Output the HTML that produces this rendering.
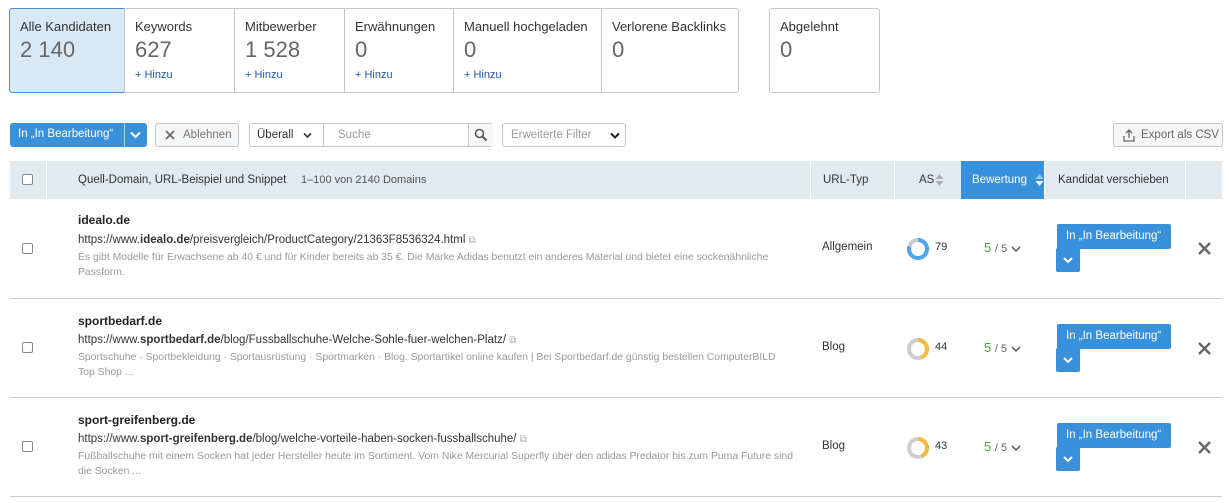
<!DOCTYPE html>
<html><head><meta charset="utf-8"><style>
*{box-sizing:border-box;margin:0;padding:0}
body{width:1229px;height:503px;background:#fff;font-family:"Liberation Sans",sans-serif;color:#333;position:relative;overflow:hidden}
.a{position:absolute;white-space:nowrap}
.tab{position:absolute;top:8px;height:85px;border:1px solid #c4c7cb;padding:10px 0 0 10px;font-size:13px;color:#333}
.tab .n{font-size:22px;color:#666;margin-top:4px;line-height:24px}
.tab .h{font-size:11px;color:#1e58a8;margin-top:7px}
.btn{position:absolute;border:1px solid #c4c7cb;border-radius:3px;font-size:11.5px;color:#777;height:24px;line-height:22px}
.hdr{position:absolute;top:161px;height:38px;background:#e2e9ef;font-size:11.5px;line-height:38px;color:#333}
.cb{position:absolute;width:11px;height:11px;border:1px solid #888;border-radius:2px;background:#fff}
.sep{position:absolute;left:10px;width:1212px;height:1px;background:#ccc}
.dom{font-size:12px;font-weight:bold;color:#222}
.url{font-size:11.5px;color:#333}
.sn{font-size:10.4px;color:#999;line-height:15px}
.bb{position:absolute;background:#3a91db;color:#fff;font-size:11.5px;border-radius:2px}
</style></head><body>
<div class="tab" style="left:9px;width:116px;background:#d9e8f5;border-color:#4a90d0;border-radius:3px 0 0 3px">Alle Kandidaten<div class="n">2 140</div></div>
<div class="tab" style="left:124px;width:111px">Keywords<div class="n">627</div><div class="h">+ Hinzu</div></div>
<div class="tab" style="left:234px;width:111px">Mitbewerber<div class="n">1 528</div><div class="h">+ Hinzu</div></div>
<div class="tab" style="left:344px;width:110px">Erwähnungen<div class="n">0</div><div class="h">+ Hinzu</div></div>
<div class="tab" style="left:453px;width:149px">Manuell hochgeladen<div class="n">0</div><div class="h">+ Hinzu</div></div>
<div class="tab" style="left:601px;width:138px;border-radius:0 3px 3px 0">Verlorene Backlinks<div class="n">0</div></div>
<div class="tab" style="left:769px;width:111px;border-radius:3px">Abgelehnt<div class="n">0</div></div>

<div class="bb" style="left:10px;top:123px;width:137px;height:24px;border-radius:3px"><span class="a" style="left:8px;top:5px">In „In Bearbeitung“</span><div class="a" style="left:114px;top:0;width:1px;height:24px;background:#fff;opacity:.6"></div><svg class="a" style="left:120px;top:8px" width="11" height="8"><path d="M1 1.5L5.5 6 10 1.5" stroke="#fff" stroke-width="2" fill="none"/></svg></div>
<div class="btn" style="left:155px;top:123px;width:84px;background:#f5f6f7"><svg class="a" style="left:9px;top:6px" width="10" height="10"><path d="M1 1L9 9M9 1L1 9" stroke="#666" stroke-width="1.6"/></svg><span class="a" style="left:27px">Ablehnen</span></div>
<div class="btn" style="left:249px;top:123px;width:244px;color:#333"><span class="a" style="left:7px">Überall</span><svg class="a" style="left:53px;top:8px" width="9" height="7"><path d="M1 1.5L4.5 5 8 1.5" stroke="#333" stroke-width="1.6" fill="none"/></svg><div class="a" style="left:73px;top:0;width:1px;height:22px;background:#c4c7cb"></div><span class="a" style="left:88px;color:#999">Suche</span><div class="a" style="left:218px;top:0;width:25px;height:22px;border-left:1px solid #c4c7cb;background:#f5f6f7"></div><svg class="a" style="left:224px;top:4px" width="14" height="14"><circle cx="5.5" cy="5.5" r="4" stroke="#555" stroke-width="1.6" fill="none"/><path d="M8.5 8.5L12.5 12.5" stroke="#555" stroke-width="2"/></svg></div>
<div class="btn" style="left:502px;top:123px;width:124px;color:#999"><span class="a" style="left:8px">Erweiterte Filter</span><svg class="a" style="left:107px;top:8px" width="10" height="8"><path d="M1 1.5L5 5.5 9 1.5" stroke="#222" stroke-width="2" fill="none"/></svg></div>
<div class="btn" style="left:1113px;top:123px;width:110px;background:#f5f6f7;color:#666"><svg class="a" style="left:9px;top:5px" width="12" height="13"><path d="M6 9V1M3 4L6 1 9 4M1 7V12H11V7" stroke="#666" stroke-width="1.3" fill="none"/></svg><span class="a" style="left:27px">Export als CSV</span></div>

<div class="hdr" style="left:10px;width:36px"></div>
<div class="cb" style="left:22px;top:174px"></div>
<div class="hdr" style="left:47px;width:763px"><span class="a" style="left:31px">Quell-Domain, URL-Beispiel und Snippet</span><span class="a" style="left:254px;color:#555;font-size:11px">1–100 von 2140 Domains</span></div>
<div class="hdr" style="left:811px;width:83px"><span class="a" style="left:12px">URL-Typ</span></div>
<div class="hdr" style="left:895px;width:66px"><span class="a" style="left:24px">AS</span><svg class="a" style="left:40px;top:12px" width="9" height="14"><path d="M0.5 6L4.5 1 8.5 6Z M0.5 8L4.5 13 8.5 8Z" fill="#aab"/></svg></div>
<div class="hdr" style="left:961px;width:83px;background:#3a91db;color:#fff"><span class="a" style="left:11px">Bewertung</span><svg class="a" style="left:74px;top:12px" width="9" height="14"><path d="M0.5 6L4.5 1 8.5 6Z" fill="#9cc8ee"/><path d="M0.5 8L4.5 13 8.5 8Z" fill="#fff"/></svg></div>
<div class="hdr" style="left:1045px;width:140px"><span class="a" style="left:13px">Kandidat verschieben</span></div>
<div class="hdr" style="left:1186px;width:36px"></div>

<!-- row 1 -->
<div class="cb" style="left:22px;top:243px"></div>
<div class="a dom" style="left:78px;top:213px">idealo.de</div>
<div class="a url" style="left:78px;top:234px">https://www.<b>idealo.de</b>/preisvergleich/ProductCategory/21363F8536324.html <span style="color:#aaa;font-size:10px">⧉</span></div>
<div class="a sn" style="left:78px;top:250px">Es gibt Modelle für Erwachsene ab 40 € und für Kinder bereits ab 35 €. Die Marke Adidas benutzt ein anderes Material und bietet eine sockenähnliche<br>Passform.</div>
<div class="a" style="left:822px;top:241px;font-size:11.5px">Allgemein</div>
<svg class="a" style="left:906px;top:237px" width="24" height="24"><circle cx="12" cy="12" r="9" stroke="#ccc" stroke-width="4" fill="none"/><circle cx="12" cy="12" r="9" stroke="#4ea5e8" stroke-width="4" fill="none" stroke-dasharray="44.7 56.5" transform="rotate(-90 12 12)"/></svg>
<div class="a" style="left:935px;top:241px;font-size:11px">79</div>
<div class="a" style="left:984px;top:240px;font-size:13px;color:#666"><span style="color:#4ca43a">5</span> <span style="font-size:11px">/ 5</span></div>
<svg class="a" style="left:1011px;top:246px" width="10" height="7"><path d="M1 1L5 5 9 1" stroke="#666" stroke-width="1.6" fill="none"/></svg>
<div class="bb" style="left:1057px;top:224px;width:114px;height:25px"><span class="a" style="left:9px;top:6px">In „In Bearbeitung“</span></div>
<div class="bb" style="left:1056px;top:248px;width:24px;height:24px"><svg class="a" style="left:7px;top:9px" width="10" height="7"><path d="M1 1L5 5 9 1" stroke="#fff" stroke-width="2" fill="none"/></svg></div>
<svg class="a" style="left:1198px;top:242px" width="13" height="13"><path d="M1 1L12 12M12 1L1 12" stroke="#666" stroke-width="2.4"/></svg>
<div class="sep" style="top:298px"></div>

<!-- row 2 -->
<div class="cb" style="left:22px;top:342px"></div>
<div class="a dom" style="left:78px;top:314px">sportbedarf.de</div>
<div class="a url" style="left:78px;top:334px">https://www.<b>sportbedarf.de</b>/blog/Fussballschuhe-Welche-Sohle-fuer-welchen-Platz/ <span style="color:#aaa;font-size:10px">⧉</span></div>
<div class="a sn" style="left:78px;top:350px">Sportschuhe · Sportbekleidung · Sportausrüstung · Sportmarken · Blog. Sportartikel online kaufen | Bei Sportbedarf.de günstig bestellen ComputerBILD<br>Top Shop ...</div>
<div class="a" style="left:822px;top:341px;font-size:11.5px">Blog</div>
<svg class="a" style="left:906px;top:337px" width="24" height="24"><circle cx="12" cy="12" r="9" stroke="#ccc" stroke-width="4" fill="none"/><circle cx="12" cy="12" r="9" stroke="#f5b93e" stroke-width="4" fill="none" stroke-dasharray="24.9 56.5" transform="rotate(-90 12 12)"/></svg>
<div class="a" style="left:935px;top:341px;font-size:11px">44</div>
<div class="a" style="left:984px;top:340px;font-size:13px;color:#666"><span style="color:#4ca43a">5</span> <span style="font-size:11px">/ 5</span></div>
<svg class="a" style="left:1011px;top:346px" width="10" height="7"><path d="M1 1L5 5 9 1" stroke="#666" stroke-width="1.6" fill="none"/></svg>
<div class="bb" style="left:1057px;top:324px;width:114px;height:25px"><span class="a" style="left:9px;top:6px">In „In Bearbeitung“</span></div>
<div class="bb" style="left:1056px;top:348px;width:24px;height:24px"><svg class="a" style="left:7px;top:9px" width="10" height="7"><path d="M1 1L5 5 9 1" stroke="#fff" stroke-width="2" fill="none"/></svg></div>
<svg class="a" style="left:1198px;top:342px" width="13" height="13"><path d="M1 1L12 12M12 1L1 12" stroke="#666" stroke-width="2.4"/></svg>
<div class="sep" style="top:397px"></div>

<!-- row 3 -->
<div class="cb" style="left:22px;top:441px"></div>
<div class="a dom" style="left:78px;top:413px">sport-greifenberg.de</div>
<div class="a url" style="left:78px;top:433px">https://www.<b>sport-greifenberg.de</b>/blog/welche-vorteile-haben-socken-fussballschuhe/ <span style="color:#aaa;font-size:10px">⧉</span></div>
<div class="a sn" style="left:78px;top:449px">Fußballschuhe mit einem Socken hat jeder Hersteller heute im Sortiment. Vom Nike Mercurial Superfly über den adidas Predator bis zum Puma Future sind<br>die Socken ...</div>
<div class="a" style="left:822px;top:440px;font-size:11.5px">Blog</div>
<svg class="a" style="left:906px;top:436px" width="24" height="24"><circle cx="12" cy="12" r="9" stroke="#ccc" stroke-width="4" fill="none"/><circle cx="12" cy="12" r="9" stroke="#f5b93e" stroke-width="4" fill="none" stroke-dasharray="24.3 56.5" transform="rotate(-90 12 12)"/></svg>
<div class="a" style="left:935px;top:440px;font-size:11px">43</div>
<div class="a" style="left:984px;top:439px;font-size:13px;color:#666"><span style="color:#4ca43a">5</span> <span style="font-size:11px">/ 5</span></div>
<svg class="a" style="left:1011px;top:445px" width="10" height="7"><path d="M1 1L5 5 9 1" stroke="#666" stroke-width="1.6" fill="none"/></svg>
<div class="bb" style="left:1057px;top:423px;width:114px;height:25px"><span class="a" style="left:9px;top:6px">In „In Bearbeitung“</span></div>
<div class="bb" style="left:1056px;top:447px;width:24px;height:24px"><svg class="a" style="left:7px;top:9px" width="10" height="7"><path d="M1 1L5 5 9 1" stroke="#fff" stroke-width="2" fill="none"/></svg></div>
<svg class="a" style="left:1198px;top:441px" width="13" height="13"><path d="M1 1L12 12M12 1L1 12" stroke="#666" stroke-width="2.4"/></svg>
<div class="sep" style="top:496px"></div>
</body></html>
